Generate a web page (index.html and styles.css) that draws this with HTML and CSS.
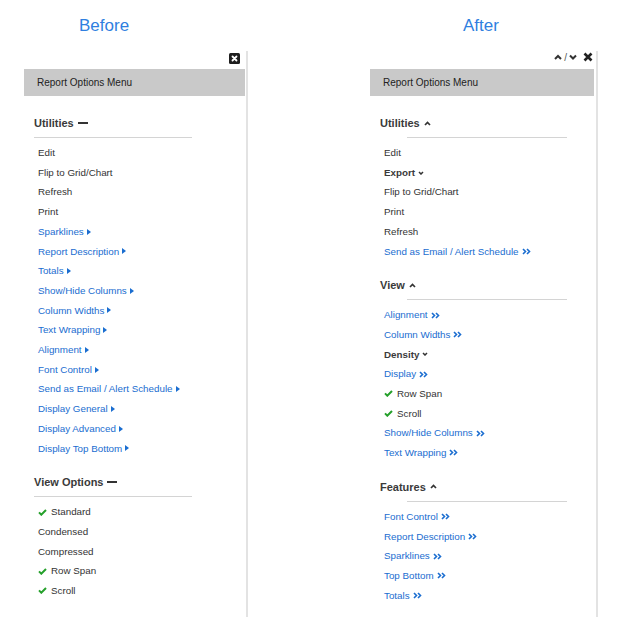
FILE: index.html
```html
<!DOCTYPE html>
<html lang="en">
<head>
    <meta charset="UTF-8">
    <meta name="viewport" content="width=device-width, initial-scale=1.0">
    <title>Report Options Menu</title>
    <link rel="stylesheet" href="styles.css">
</head>
<body>
    <div class="page">
        <!-- Old menu -->
        <div class="side side-before">
            <h1 class="title">Before</h1>
            <div class="panel">
                <div class="toolbar">
                    <svg class="close-box" width="11" height="11" viewBox="0 0 11 11"><rect width="11" height="11" rx="1.5" fill="#1e1e1e"/><path d="M3.5 3.5L7.5 7.5M7.5 3.5L3.5 7.5" stroke="#fff" stroke-width="1.8" stroke-linecap="round"/></svg>
                </div>
                <div class="menu-bar">Report Options Menu</div>

                <div class="section">
                    <h2 class="heading">Utilities <span class="dash"></span></h2>
                    <hr class="rule">
                    <ul class="items">
                        <li>Edit</li>
                        <li>Flip to Grid/Chart</li>
                        <li>Refresh</li>
                        <li>Print</li>
                        <li class="link">Sparklines <span class="tri"></span></li>
                        <li class="link">Report Description <span class="tri"></span></li>
                        <li class="link">Totals <span class="tri"></span></li>
                        <li class="link">Show/Hide Columns <span class="tri"></span></li>
                        <li class="link">Column Widths <span class="tri"></span></li>
                        <li class="link">Text Wrapping <span class="tri"></span></li>
                        <li class="link">Alignment <span class="tri"></span></li>
                        <li class="link">Font Control <span class="tri"></span></li>
                        <li class="link">Send as Email / Alert Schedule <span class="tri"></span></li>
                        <li class="link">Display General <span class="tri"></span></li>
                        <li class="link">Display Advanced <span class="tri"></span></li>
                        <li class="link">Display Top Bottom <span class="tri"></span></li>
                    </ul>
                </div>

                <div class="section">
                    <h2 class="heading">View Options <span class="dash"></span></h2>
                    <hr class="rule">
                    <ul class="items">
                        <li><svg class="check" width="9" height="7" viewBox="0 0 9 7"><polyline points="1,3.4 3.3,5.7 8,1" fill="none" stroke="#25a02b" stroke-width="2"/></svg>Standard</li>
                        <li>Condensed</li>
                        <li>Compressed</li>
                        <li><svg class="check" width="9" height="7" viewBox="0 0 9 7"><polyline points="1,3.4 3.3,5.7 8,1" fill="none" stroke="#25a02b" stroke-width="2"/></svg>Row Span</li>
                        <li><svg class="check" width="9" height="7" viewBox="0 0 9 7"><polyline points="1,3.4 3.3,5.7 8,1" fill="none" stroke="#25a02b" stroke-width="2"/></svg>Scroll</li>
                    </ul>
                </div>
            </div>
        </div>

        <!-- New menu -->
        <div class="side side-after">
            <h1 class="title">After</h1>
            <div class="panel">
                <div class="toolbar">
                    <svg width="8" height="6" viewBox="0 0 8 6"><polyline points="1,5 4,2 7,5" fill="none" stroke="#333" stroke-width="2"/></svg>
                    <span class="slash">/</span>
                    <svg width="8" height="6" viewBox="0 0 8 6"><polyline points="1,1.5 4,4.5 7,1.5" fill="none" stroke="#333" stroke-width="2"/></svg>
                    <svg class="close-x" width="10" height="10" viewBox="0 0 10 10"><path d="M1.5 1.5L8.5 8.5M8.5 1.5L1.5 8.5" stroke="#222" stroke-width="2.6"/></svg>
                </div>
                <div class="menu-bar">Report Options Menu</div>

                <div class="section">
                    <h2 class="heading">Utilities <svg width="7" height="5" viewBox="0 0 7 5"><polyline points="1,4 3.5,1.5 6,4" fill="none" stroke="#333" stroke-width="1.7"/></svg></h2>
                    <hr class="rule">
                    <ul class="items">
                        <li>Edit</li>
                        <li class="group">Export <svg width="6" height="4" viewBox="0 0 6 4"><polyline points="1,1 3,3 5,1" fill="none" stroke="#333" stroke-width="1.5"/></svg></li>
                        <li>Flip to Grid/Chart</li>
                        <li>Print</li>
                        <li>Refresh</li>
                        <li class="link">Send as Email / Alert Schedule <svg width="9" height="7" viewBox="0 0 9 7"><path d="M1 1l2.5 2.5L1 6M5 1l2.5 2.5L5 6" fill="none" stroke="#1a6dd0" stroke-width="1.6"/></svg></li>
                    </ul>
                </div>

                <div class="section">
                    <h2 class="heading">View <svg width="7" height="5" viewBox="0 0 7 5"><polyline points="1,4 3.5,1.5 6,4" fill="none" stroke="#333" stroke-width="1.7"/></svg></h2>
                    <hr class="rule">
                    <ul class="items">
                        <li class="link">Alignment <svg width="9" height="7" viewBox="0 0 9 7"><path d="M1 1l2.5 2.5L1 6M5 1l2.5 2.5L5 6" fill="none" stroke="#1a6dd0" stroke-width="1.6"/></svg></li>
                        <li class="link">Column Widths <svg width="9" height="7" viewBox="0 0 9 7"><path d="M1 1l2.5 2.5L1 6M5 1l2.5 2.5L5 6" fill="none" stroke="#1a6dd0" stroke-width="1.6"/></svg></li>
                        <li class="group">Density <svg width="6" height="4" viewBox="0 0 6 4"><polyline points="1,1 3,3 5,1" fill="none" stroke="#333" stroke-width="1.5"/></svg></li>
                        <li class="link">Display <svg width="9" height="7" viewBox="0 0 9 7"><path d="M1 1l2.5 2.5L1 6M5 1l2.5 2.5L5 6" fill="none" stroke="#1a6dd0" stroke-width="1.6"/></svg></li>
                        <li><svg class="check" width="9" height="7" viewBox="0 0 9 7"><polyline points="1,3.4 3.3,5.7 8,1" fill="none" stroke="#25a02b" stroke-width="2"/></svg>Row Span</li>
                        <li><svg class="check" width="9" height="7" viewBox="0 0 9 7"><polyline points="1,3.4 3.3,5.7 8,1" fill="none" stroke="#25a02b" stroke-width="2"/></svg>Scroll</li>
                        <li class="link">Show/Hide Columns <svg width="9" height="7" viewBox="0 0 9 7"><path d="M1 1l2.5 2.5L1 6M5 1l2.5 2.5L5 6" fill="none" stroke="#1a6dd0" stroke-width="1.6"/></svg></li>
                        <li class="link">Text Wrapping <svg width="9" height="7" viewBox="0 0 9 7"><path d="M1 1l2.5 2.5L1 6M5 1l2.5 2.5L5 6" fill="none" stroke="#1a6dd0" stroke-width="1.6"/></svg></li>
                    </ul>
                </div>

                <div class="section">
                    <h2 class="heading">Features <svg width="7" height="5" viewBox="0 0 7 5"><polyline points="1,4 3.5,1.5 6,4" fill="none" stroke="#333" stroke-width="1.7"/></svg></h2>
                    <hr class="rule">
                    <ul class="items">
                        <li class="link">Font Control <svg width="9" height="7" viewBox="0 0 9 7"><path d="M1 1l2.5 2.5L1 6M5 1l2.5 2.5L5 6" fill="none" stroke="#1a6dd0" stroke-width="1.6"/></svg></li>
                        <li class="link">Report Description <svg width="9" height="7" viewBox="0 0 9 7"><path d="M1 1l2.5 2.5L1 6M5 1l2.5 2.5L5 6" fill="none" stroke="#1a6dd0" stroke-width="1.6"/></svg></li>
                        <li class="link">Sparklines <svg width="9" height="7" viewBox="0 0 9 7"><path d="M1 1l2.5 2.5L1 6M5 1l2.5 2.5L5 6" fill="none" stroke="#1a6dd0" stroke-width="1.6"/></svg></li>
                        <li class="link">Top Bottom <svg width="9" height="7" viewBox="0 0 9 7"><path d="M1 1l2.5 2.5L1 6M5 1l2.5 2.5L5 6" fill="none" stroke="#1a6dd0" stroke-width="1.6"/></svg></li>
                        <li class="link">Totals <svg width="9" height="7" viewBox="0 0 9 7"><path d="M1 1l2.5 2.5L1 6M5 1l2.5 2.5L5 6" fill="none" stroke="#1a6dd0" stroke-width="1.6"/></svg></li>
                    </ul>
                </div>
            </div>
        </div>
    </div>
</body>
</html>
```

FILE: styles.css
```css
body {
    margin: 0;
    font-family: "Liberation Sans", Arial, sans-serif;
    background: #fff;
    color: #333;
}
.page {
    display: flex;
    align-items: stretch;
}
.side {
    display: flex;
    flex-direction: column;
}
.side-before {
    margin-left: 24px;
    width: 224px;
}
.side-after {
    margin-left: 122px;
    width: 228px;
}
.title {
    margin: 16px 0 0;
    font-size: 17px;
    font-weight: normal;
    line-height: 20px;
    color: #2f7fe0;
}
.side-before .title {
    padding-left: 55px;
}
.side-after .title {
    padding-left: 93px;
}
.panel {
    flex: 1;
    margin-top: 15px;
    padding-bottom: 12px;
    border-right: 2px solid #e3e3e3;
}
.side-before .panel {
    padding-right: 1px;
}
.side-after .panel {
    padding-right: 2px;
}
.toolbar {
    height: 14px;
    margin-bottom: 4px;
    display: flex;
    justify-content: flex-end;
    align-items: center;
}
.side-before .toolbar {
    padding-right: 5px;
}
.side-after .toolbar {
    padding-right: 1px;
    height: 12px;
    margin-bottom: 6px;
}
.slash {
    font-size: 10px;
    color: #555;
    margin: 0 2px;
}
.close-x {
    margin-left: 6px;
}
.menu-bar {
    height: 27px;
    line-height: 27px;
    padding-left: 13px;
    margin-bottom: 20px;
    background-color: #c9c9c9;
    font-size: 10px;
    color: #222;
}
.section {
    padding-left: 10px;
}
.section + .section {
    margin-top: 17px;
}
.heading {
    margin: 0;
    display: flex;
    align-items: center;
    gap: 4px;
    font-size: 11px;
    line-height: 14px;
    font-weight: bold;
    color: #3a3a3a;
}
.dash {
    display: inline-block;
    width: 10px;
    height: 2px;
    background-color: #333;
}
.rule {
    margin: 7px 0 0;
    height: 0;
    border: 0;
    border-top: 1px solid #d4d4d4;
}
.side-before .rule {
    width: 158px;
}
.side-after .rule {
    width: 160px;
    margin-left: 27px;
}
.items {
    list-style: none;
    margin: 0;
    padding: 5px 0 0 4px;
}
.items li {
    display: flex;
    align-items: center;
    gap: 3px;
    font-size: 9.8px;
    line-height: 19.7px;
    color: #333;
}
.items li.link {
    color: #1a6dd0;
}
.items li.group {
    font-weight: bold;
    color: #3a3a3a;
}
.tri {
    display: inline-block;
    width: 0;
    height: 0;
    border-left: 4px solid #1a6dd0;
    border-top: 3.5px solid transparent;
    border-bottom: 3.5px solid transparent;
}
.check {
    margin-right: 1px;
}
```
